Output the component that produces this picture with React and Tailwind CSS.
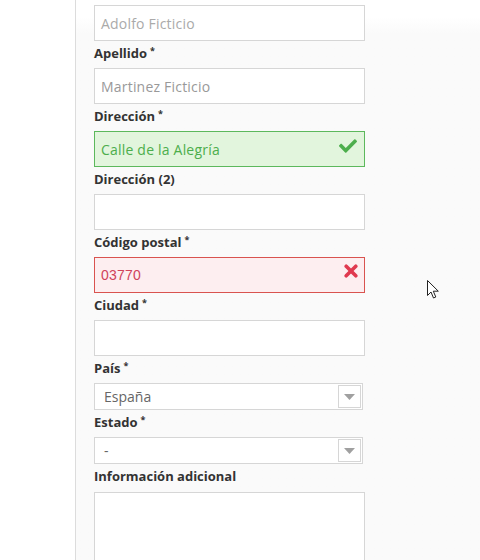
import { FaCheck } from 'react-icons/fa';

const labelCls =
  "block font-['Open_Sans',sans-serif] text-[13px] font-bold text-[#333] leading-6";

function Label({ children, required, className = 'mb-[3px]' }) {
  return (
    <label className={`${labelCls} ${className}`}>
      {children}
      {required && <sup className="ml-[3px] text-[9px] font-bold">*</sup>}
    </label>
  );
}

function Field({ label, required, value, placeholder, state, dim }) {
  const tone =
    state === 'ok'
      ? 'border-[#5cb85c] bg-[#e2f5dd] text-[#4cae4c]'
      : state === 'error'
        ? 'border-[#d9534f] bg-[#fdeef0] text-[#d0435a] font-["Liberation_Sans",Arial,sans-serif]'
        : dim
          ? 'border-[#d6d6d6] bg-white text-[#aaa]'
          : 'border-[#d6d6d6] bg-white text-[#999]';
  return (
    <div>
      {label && <Label required={required}>{label}</Label>}
      <div
        className={`relative flex h-9 w-[271px] items-center border px-[6px] text-[14px] tracking-[0.2px] ${tone}`}
      >
        <span>{value || placeholder}</span>
        {state === 'ok' && (
          <FaCheck className="absolute right-[7px] top-[5px] h-[18px] w-[18px] text-[#4cae4c]" />
        )}
        {state === 'error' && (
          <svg
            className="absolute right-[6px] top-[6px]"
            width="14"
            height="14"
            viewBox="0 0 14 14"
          >
            <path
              d="M2.2 2.2l9.6 9.6M11.8 2.2l-9.6 9.6"
              stroke="#e0394f"
              strokeWidth="3.6"
              strokeLinecap="round"
            />
          </svg>
        )}
      </div>
    </div>
  );
}

function SelectField({ label, value }) {
  return (
    <div>
      <Label required className="mb-[3px]">
        {label}
      </Label>
      <div className="flex h-[27px] w-[269px] items-center justify-between border border-[#d6d6d6] bg-white pl-[9px] pr-[1px] text-[14px] text-[#666]">
        <span>{value}</span>
        <div className="flex h-[23px] w-[23px] items-center justify-center border border-[#d6d6d6] bg-white">
          <svg width="11" height="6" viewBox="0 0 11 6">
            <path d="M0 0h11L5.5 6z" fill="#a0a0a0" />
          </svg>
        </div>
      </div>
    </div>
  );
}

export default function App() {
  return (
    <div className="relative flex h-[560px] w-[480px] overflow-hidden bg-white font-['Open_Sans',sans-serif]">
      <div className="w-[76px] shrink-0 border-r border-[#dcdcdc] bg-white" />
      <div className="flex-1 bg-gradient-to-b from-white from-[3%] to-[#fafafa] to-[6%] pl-[18px] pt-[5px]">
        <Field placeholder="Adolfo Ficticio" dim />
        <Field label="Apellido" required placeholder="Martinez Ficticio" />
        <Field label="Dirección" required value="Calle de la Alegría" state="ok" />
        <Field label="Dirección (2)" />
        <Field label="Código postal" required value="03770" state="error" />
        <Field label="Ciudad" required />
        <SelectField label="País" value="España" />
        <SelectField label="Estado" value="-" />
        <Label className="mb-1">Información adicional</Label>
        <div className="h-[80px] w-[271px] border border-[#d6d6d6] bg-white" />
      </div>

      {/* mouse pointer */}
      <svg
        className="absolute left-[427px] top-[280px]"
        width="13"
        height="20"
        viewBox="0 0 13 20"
      >
        <path
          d="M0.5 0.5v15l3.5-3.5 2.5 6 2.3-1-2.5-5.8h5z"
          fill="white"
          stroke="#222"
          strokeWidth="1"
          strokeLinejoin="round"
        />
      </svg>
    </div>
  );
}
